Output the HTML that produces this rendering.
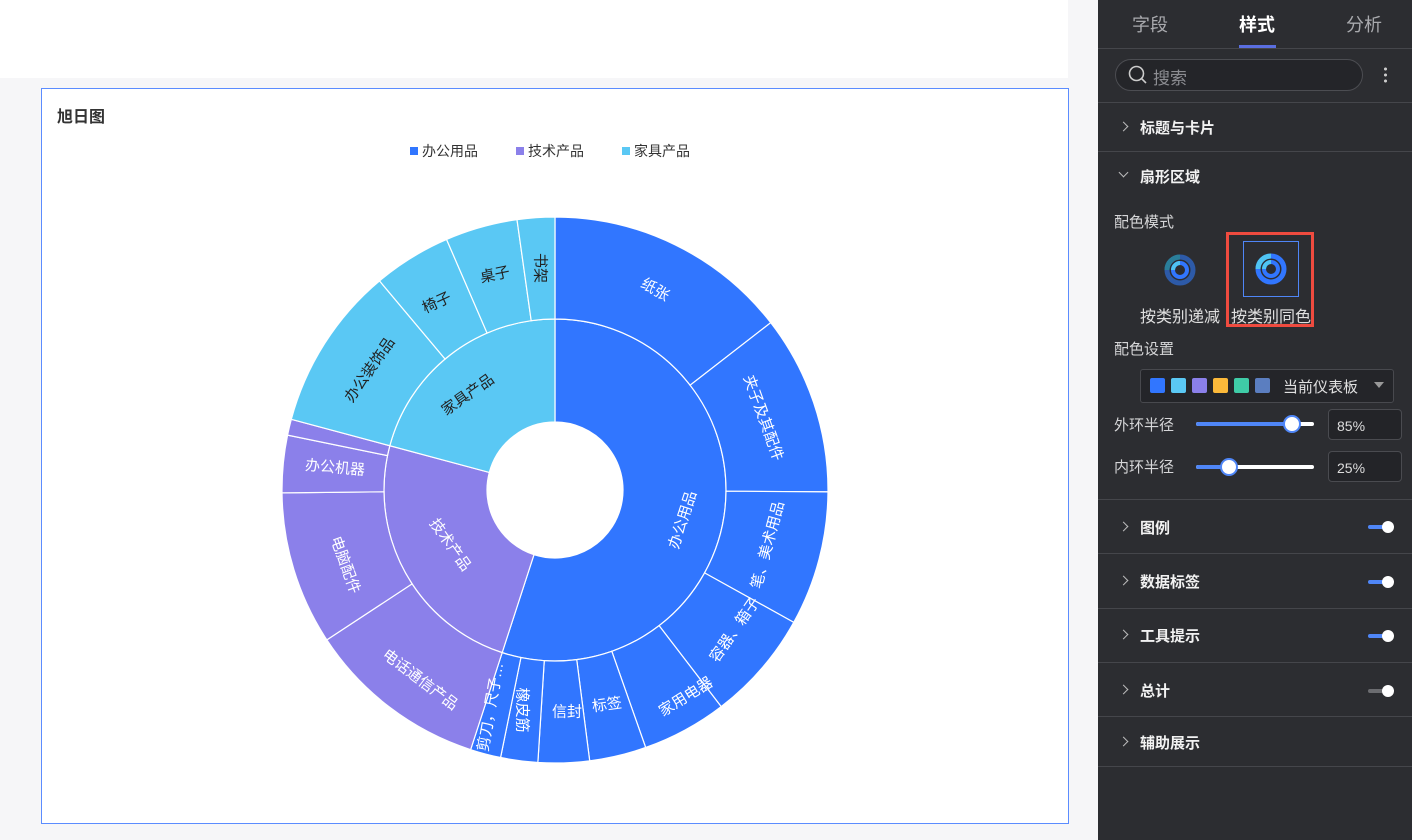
<!DOCTYPE html>
<html><head><meta charset="utf-8">
<style>
*{margin:0;padding:0;box-sizing:border-box}
body{width:1412px;height:840px;overflow:hidden;background:#f6f6f8;font-family:"Liberation Sans","Noto Sans CJK SC",sans-serif;position:relative}
.top{position:absolute;left:0;top:0;width:1068px;height:78px;background:#fff}
.card{position:absolute;left:41px;top:88px;width:1028px;height:736px;background:#fff;border:1px solid #5b8cff}
.title{position:absolute;left:15px;top:14px;font-size:16px;font-weight:bold;color:#333}
.legend{position:absolute;top:52px;left:368px;font-size:14px;color:#333;display:flex;gap:38px}
.legend span{display:flex;align-items:center}
.legend i{display:inline-block;width:8px;height:8px;margin-right:4px}
.panel{position:absolute;left:1098px;top:0;width:314px;height:840px;background:#2c2d31;color:#e6e6e6}
.tab{position:absolute;top:11px;font-size:18px;color:#a9aaae}
.hr{position:absolute;left:0;width:314px;height:1px;background:#45464b}
.sec{position:absolute;left:42px;font-size:15px;font-weight:bold;color:#f2f2f2}
.chev{position:absolute;left:22px;width:7px;height:7px;border-right:1.5px solid #bbb;border-bottom:1.5px solid #bbb}
.lbl{position:absolute;left:16px;font-size:15px;color:#d6d6d8}
.tog{position:absolute;left:270px;width:24px;height:4px;border-radius:2px;background:#4f86f7}
.tog::after{content:"";position:absolute;right:-2px;top:-4px;width:12px;height:12px;border-radius:50%;background:#fff}
.inp{position:absolute;left:230px;width:74px;height:31px;border:1px solid #4a4b50;border-radius:4px;background:#232428;font-size:14px;color:#ddd;padding:8px 0 0 8px}
</style></head><body>
<div class="top"></div>
<div class="card">
<div class="title">旭日图</div>
<div class="legend"><span><i style="background:#3176ff"></i>办公用品</span><span><i style="background:#8b80ea"></i>技术产品</span><span><i style="background:#5ac8f4"></i>家具产品</span></div>
</div>
<svg id="sb" width="1412" height="840" style="position:absolute;left:0;top:0"></svg>
<div class="panel">
<div class="tab" style="left:34px">字段</div>
<div class="tab" style="left:141px;color:#fff;font-weight:bold">样式</div>
<div class="tab" style="left:248px">分析</div>
<div style="position:absolute;left:141px;top:45px;width:37px;height:3px;background:#5a6ee0"></div>
<div class="hr" style="top:48px"></div>
<div style="position:absolute;left:17px;top:59px;width:248px;height:32px;border:1px solid #4c4d52;border-radius:16px;background:#242529"></div>
<svg style="position:absolute;left:30px;top:65px" width="20" height="20"><circle cx="8.5" cy="8.5" r="7" fill="none" stroke="#ccc" stroke-width="1.6"/><line x1="13.5" y1="13.5" x2="18" y2="18" stroke="#ccc" stroke-width="1.6"/></svg>
<div style="position:absolute;left:55px;top:64px;font-size:17px;color:#8c8d92">搜索</div>
<div style="position:absolute;left:286px;top:66px;width:3px;height:18px;background:radial-gradient(circle,#ccc 1.4px,transparent 1.6px) 0 0/3px 6px"></div>
<div class="hr" style="top:102px"></div>
<div class="chev" style="top:123px;transform:rotate(-45deg)"></div><div class="sec" style="top:117px">标题与卡片</div>
<div class="hr" style="top:151px"></div>
<div class="chev" style="top:169px;transform:rotate(45deg)"></div><div class="sec" style="top:166px">扇形区域</div>
<div class="lbl" style="top:211px">配色模式</div>
<svg style="position:absolute;left:66px;top:254px" width="32" height="32"><circle cx="16" cy="16" r="13" fill="none" stroke="#2d5aa8" stroke-width="5"/><path d="M16 3 A13 13 0 0 0 3 16" fill="none" stroke="#2a7e99" stroke-width="5"/><circle cx="16" cy="16" r="7" fill="none" stroke="#3176ff" stroke-width="4"/><path d="M16 9 A7 7 0 0 0 9 16" fill="none" stroke="#4fc4f2" stroke-width="4"/></svg>
<div style="position:absolute;left:42px;top:303px;font-size:16px;color:#e0e0e0">按类别递减</div>
<div style="position:absolute;left:128px;top:232px;width:88px;height:95px;border:3px solid #ef4b3f"></div>
<div style="position:absolute;left:145px;top:241px;width:56px;height:56px;border:1px solid #4f86f7"></div>
<svg style="position:absolute;left:157px;top:253px" width="32" height="32"><circle cx="16" cy="16" r="13" fill="none" stroke="#3176ff" stroke-width="5"/><path d="M16 3 A13 13 0 0 0 3 16" fill="none" stroke="#4fc4f2" stroke-width="5"/><circle cx="16" cy="16" r="7" fill="none" stroke="#3176ff" stroke-width="4"/><path d="M16 9 A7 7 0 0 0 9 16" fill="none" stroke="#4fc4f2" stroke-width="4"/></svg>
<div style="position:absolute;left:133px;top:303px;font-size:16px;color:#e0e0e0">按类别同色</div>
<div class="lbl" style="top:338px">配色设置</div>
<div style="position:absolute;left:42px;top:369px;width:254px;height:34px;border:1px solid #48494e;border-radius:3px;background:#242529"></div>
<div style="position:absolute;left:52px;top:378px;display:flex;gap:6px">
<i style="width:15px;height:15px;background:#3176ff;border-radius:2px"></i><i style="width:15px;height:15px;background:#5ac8f4;border-radius:2px"></i><i style="width:15px;height:15px;background:#8b80ea;border-radius:2px"></i><i style="width:15px;height:15px;background:#fbb93a;border-radius:2px"></i><i style="width:15px;height:15px;background:#3fcca7;border-radius:2px"></i><i style="width:15px;height:15px;background:#5b7ec0;border-radius:2px"></i></div>
<div style="position:absolute;left:185px;top:376px;font-size:15px;color:#e0e0e0">当前仪表板</div>
<div style="position:absolute;left:276px;top:382px;border-left:5px solid transparent;border-right:5px solid transparent;border-top:6px solid #999"></div>
<div class="lbl" style="top:414px">外环半径</div>
<div style="position:absolute;left:98px;top:422px;width:118px;height:4px;border-radius:2px;background:#fff"></div>
<div style="position:absolute;left:98px;top:422px;width:96px;height:4px;border-radius:2px;background:#4f86f7"></div>
<div style="position:absolute;left:185px;top:415px;width:18px;height:18px;border-radius:50%;background:#fff;border:2px solid #4f86f7"></div>
<div class="inp" style="top:409px">85%</div>
<div class="lbl" style="top:456px">内环半径</div>
<div style="position:absolute;left:98px;top:465px;width:118px;height:4px;border-radius:2px;background:#fff"></div>
<div style="position:absolute;left:98px;top:465px;width:34px;height:4px;border-radius:2px;background:#4f86f7"></div>
<div style="position:absolute;left:122px;top:458px;width:18px;height:18px;border-radius:50%;background:#fff;border:2px solid #4f86f7"></div>
<div class="inp" style="top:451px">25%</div>
<div class="hr" style="top:499px"></div>
<div class="chev" style="top:523px;transform:rotate(-45deg)"></div><div class="sec" style="top:517px">图例</div><div class="tog" style="top:525px"></div>
<div class="hr" style="top:553px"></div>
<div class="chev" style="top:577px;transform:rotate(-45deg)"></div><div class="sec" style="top:571px">数据标签</div><div class="tog" style="top:580px"></div>
<div class="hr" style="top:608px"></div>
<div class="chev" style="top:631px;transform:rotate(-45deg)"></div><div class="sec" style="top:625px">工具提示</div><div class="tog" style="top:634px"></div>
<div class="hr" style="top:662px"></div>
<div class="chev" style="top:686px;transform:rotate(-45deg)"></div><div class="sec" style="top:680px">总计</div><div class="tog" style="top:689px;background:#6b6c70"></div>
<div class="hr" style="top:716px"></div>
<div class="chev" style="top:738px;transform:rotate(-45deg)"></div><div class="sec" style="top:732px">辅助展示</div>
<div class="hr" style="top:766px"></div>
</div>
<script>
var cx=555,cy=490,R0=68,R1=171,R2=273;
var B='#3176ff',P='#8b80ea',C='#5ac8f4';
var svg=document.getElementById('sb'),h='';
function pt(r,a){a=a*Math.PI/180;return [cx+r*Math.sin(a),cy-r*Math.cos(a)];}
function arc(r0,r1,a0,a1,col){var l=(a1-a0)>180?1:0;var p1=pt(r1,a0),p2=pt(r1,a1),p3=pt(r0,a1),p4=pt(r0,a0);
h+='<path d="M'+p1+' A'+r1+' '+r1+' 0 '+l+' 1 '+p2+' L'+p3+' A'+r0+' '+r0+' 0 '+l+' 0 '+p4+' Z" fill="'+col+'" stroke="#fff" stroke-width="1.2"/>';}
arc(R0,R1,0,198,B);arc(R0,R1,198,285,P);arc(R0,R1,285,360,C);
var o=[[0,52.2,B],[52.2,90.4,B],[90.4,119,B],[119,142.5,B],[142.5,160.6,B],[160.6,172.7,B],[172.7,183.6,B],[183.6,191.5,B],[191.5,198,B],
[198,236.7,P],[236.7,269.4,P],[269.4,281.6,P],[281.6,285,P],[285,320,C],[320,336.6,C],[336.6,352,C],[352,360,C]];
o.forEach(function(s){arc(R1,R2,s[0],s[1],s[2]);});
var L=[['纸张',655,290,30,'#fff'],['夹子及其配件',763,418,70,'#fff'],['笔、美术用品',768,545,-75,'#fff'],['容器、箱子',735,630,-55,'#fff'],
['家用电器',686,697,-32,'#fff'],['标签',607,705,-8,'#fff'],['信封',567,712,0,'#fff'],['橡皮筋',522,710,90,'#fff'],['剪刀，尺子…',491,707,-80,'#fff'],
['办公用品',683,520,-72,'#fff'],['电话通信产品',420,680,37,'#fff'],['电脑配件',345,565,70,'#fff'],['办公机器',335,468,5,'#fff'],['技术产品',450,545,55,'#fff'],
['办公装饰品',370,370,-55,'#222'],['椅子',437,303,-25,'#222'],['桌子',495,275,-12,'#222'],['书架',540,268,90,'#222'],['家具产品',468,395,-35,'#222']];
L.forEach(function(t){h+='<text x="'+t[1]+'" y="'+t[2]+'" transform="rotate('+t[3]+' '+t[1]+' '+t[2]+')" fill="'+t[4]+'" font-size="15" text-anchor="middle" dominant-baseline="central" font-family="Liberation Sans,Noto Sans CJK SC,sans-serif">'+t[0]+'</text>';});
svg.innerHTML=h;
</script>
</body></html>
